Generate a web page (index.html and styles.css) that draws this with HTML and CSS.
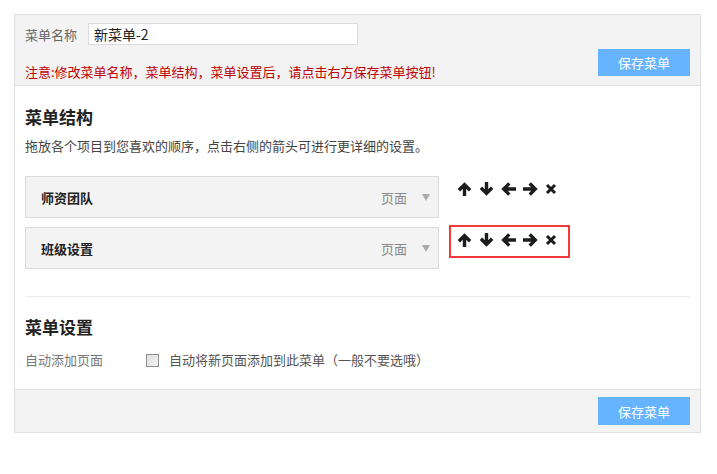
FILE: index.html
```html
<!DOCTYPE html>
<html lang="zh">
<head>
<meta charset="utf-8">
<title>菜单</title>
<link rel="stylesheet" href="styles.css">
</head>
<body>
<div class="menu-box">
  <div class="menu-header">
    <div class="header-left">
      <div class="name-row">
        <span class="name-label">菜单名称</span>
        <input class="name-input" type="text" value="新菜单-2">
      </div>
      <p class="warning">注意:修改菜单名称，菜单结构，菜单设置后，请点击右方保存菜单按钮!</p>
    </div>
    <button class="save-btn header-btn">保存菜单</button>
  </div>

  <div class="menu-body">
    <h3 class="section-title">菜单结构</h3>
    <p class="section-desc">拖放各个项目到您喜欢的顺序，点击右侧的箭头可进行更详细的设置。</p>

    <ul class="menu-items">
      <li class="menu-row">
        <div class="item-box">
          <span class="item-title">师资团队</span>
          <span class="item-type">页面</span>
          <span class="item-toggle"></span>
        </div>
        <div class="item-actions">
          <svg class="ic" viewBox="0 0 15 14"><path d="M7.5 14V3M1.9 8.3L7.5 2.7l5.6 5.6"/></svg>
          <svg class="ic" viewBox="0 0 15 14"><path d="M7.5 0v11M1.9 5.7l5.6 5.6 5.6-5.6"/></svg>
          <svg class="ic" viewBox="0 0 15 14"><path d="M15 7H3.5M8.3 1.4L2.7 7l5.6 5.6"/></svg>
          <svg class="ic" viewBox="0 0 15 14"><path d="M0 7h11.5M6.7 1.4L12.3 7l-5.6 5.6"/></svg>
          <svg class="ic ic-x" viewBox="0 0 12 14"><path d="M2 3l8 8M10 3l-8 8"/></svg>
        </div>
      </li>
      <li class="menu-row">
        <div class="item-box">
          <span class="item-title">班级设置</span>
          <span class="item-type">页面</span>
          <span class="item-toggle"></span>
        </div>
        <div class="item-actions is-marked">
          <svg class="ic" viewBox="0 0 15 14"><path d="M7.5 14V3M1.9 8.3L7.5 2.7l5.6 5.6"/></svg>
          <svg class="ic" viewBox="0 0 15 14"><path d="M7.5 0v11M1.9 5.7l5.6 5.6 5.6-5.6"/></svg>
          <svg class="ic" viewBox="0 0 15 14"><path d="M15 7H3.5M8.3 1.4L2.7 7l5.6 5.6"/></svg>
          <svg class="ic" viewBox="0 0 15 14"><path d="M0 7h11.5M6.7 1.4L12.3 7l-5.6 5.6"/></svg>
          <svg class="ic ic-x" viewBox="0 0 12 14"><path d="M2 3l8 8M10 3l-8 8"/></svg>
        </div>
      </li>
    </ul>

    <hr class="divider">

    <h3 class="section-title settings-title">菜单设置</h3>
    <div class="setting-row">
      <span class="setting-label">自动添加页面</span>
      <label class="check-label"><span class="checkbox"></span>自动将新页面添加到此菜单（一般不要选哦）</label>
    </div>
  </div>

  <div class="menu-footer">
    <button class="save-btn">保存菜单</button>
  </div>
</div>
</body>
</html>
```

FILE: styles.css
```css
* { box-sizing: border-box; }

body {
  margin: 0;
  padding: 14px;
  background: #fff;
  font-family: "Noto Sans CJK SC", "Noto Sans", sans-serif;
  font-size: 13px;
  color: #333;
}

.menu-box {
  width: 687px;
  border: 1px solid #e0e0e0;
}

.menu-header {
  display: flex;
  justify-content: space-between;
  align-items: flex-end;
  background: #f3f3f3;
  border-bottom: 1px solid #e0e0e0;
  padding: 8px 10px 5px 10px;
}

.name-row {
  display: flex;
  align-items: center;
  height: 22px;
}

.name-label {
  width: 63px;
  color: #666;
  line-height: 20px;
  padding-top: 2px;
}

.name-input {
  width: 270px;
  height: 22px;
  border: 1px solid #dcdcdc;
  background: #fff;
  padding: 0 5px;
  font-family: "Noto Sans CJK SC", "Noto Sans", sans-serif;
  font-size: 14px;
  color: #222;
  outline: none;
}

.warning {
  margin: 19px 0 0 0;
  line-height: 16px;
  color: #c00000;
}

.save-btn {
  width: 92px;
  height: 28px;
  border: none;
  background: #66b3ff;
  color: #fff;
  font-family: "Noto Sans CJK SC", "Noto Sans", sans-serif;
  font-size: 13px;
  padding: 0;
  cursor: pointer;
}

.header-btn {
  height: 27px;
  margin-bottom: 4px;
}

.menu-body {
  background: #fff;
  padding: 19px 10px 19px 10px;
}

.section-title {
  margin: 0;
  font-size: 17px;
  line-height: 24px;
  font-weight: bold;
  color: #222;
}

.section-desc {
  margin: 8px 0 0 0;
  line-height: 18px;
  color: #444;
}

.menu-items {
  list-style: none;
  margin: 21px 0 0 0;
  padding: 0;
  display: flex;
  flex-direction: column;
  gap: 9px;
}

.menu-row {
  display: flex;
  align-items: flex-start;
  gap: 10px;
}

.item-box {
  width: 414px;
  height: 42px;
  display: flex;
  align-items: center;
  background: #f3f3f3;
  border: 1px solid #dcdcdc;
  padding: 0 8px 0 15px;
}

.item-title {
  flex: 1;
  font-weight: bold;
  color: #222;
}

.item-type {
  color: #8a8a8a;
}

.item-toggle {
  margin-left: 15px;
  width: 0;
  height: 0;
  border-left: 4px solid transparent;
  border-right: 4px solid transparent;
  border-top: 7px solid #aaa;
}

.item-actions {
  display: flex;
  gap: 7px;
  margin-top: -2px;
  width: 121px;
  height: 33px;
  padding: 6px 0 0 6px;
  border: 2px solid transparent;
}

.item-actions.is-marked {
  border-color: #f23a3a;
}

.ic {
  width: 15px;
  height: 14px;
  fill: none;
  stroke: #1c1c1c;
  stroke-width: 3.4;
  stroke-linecap: butt;
  stroke-linejoin: miter;
}

.ic-x {
  width: 12px;
  stroke-width: 3;
}

.divider {
  margin: 27px 0 0 0;
  border: none;
  border-top: 1px solid #ebebeb;
  height: 0;
}

.settings-title {
  margin-top: 18px;
}

.setting-row {
  display: flex;
  align-items: center;
  margin-top: 11px;
  line-height: 20px;
}

.setting-label {
  width: 121px;
  color: #777;
}

.check-label {
  display: flex;
  align-items: center;
  color: #555;
}

.checkbox {
  width: 13px;
  height: 13px;
  border: 1px solid #8f8f8f;
  background: linear-gradient(135deg, #dcdcdc, #f7f7f7);
  margin-right: 10px;
}

.menu-footer {
  display: flex;
  justify-content: flex-end;
  background: #f3f3f3;
  border-top: 1px solid #e0e0e0;
  padding: 7px 10px;
}
```
